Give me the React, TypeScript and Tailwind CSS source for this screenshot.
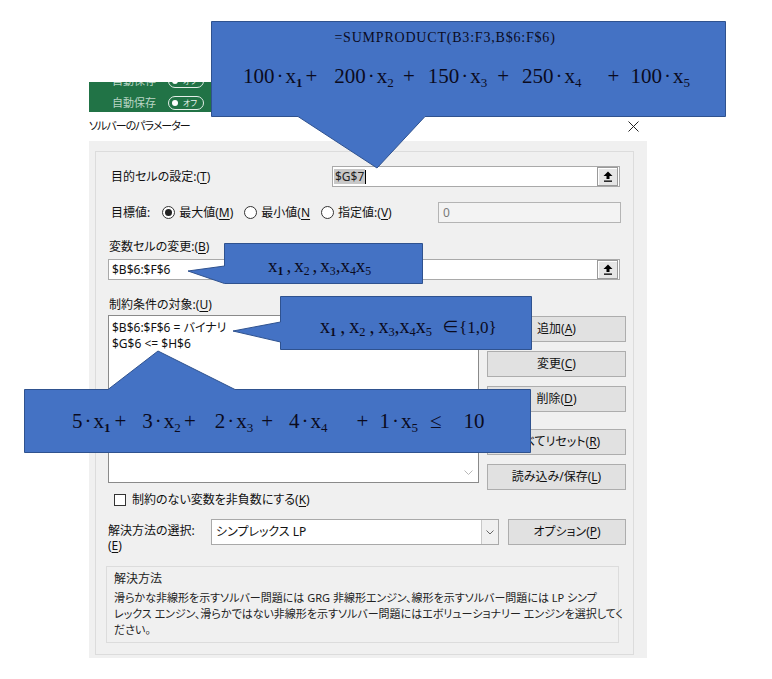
import React from 'react';

const ui = "font-['Noto_Sans','Noto_Sans_CJK_JP',sans-serif] [font-feature-settings:'palt']";
const serif = "font-['Liberation_Serif','Noto_Sans_CJK_JP',serif]";

function U({ k }: { k: string }) {
  return <span className="underline underline-offset-2">{k}</span>;
}

function Term({ n, s, bold }: { n: string; s: string; bold?: boolean }) {
  return (
    <span className="inline-flex items-baseline whitespace-nowrap">
      <span>{n}</span>
      <span className="mx-[2px]">·</span>
      <span>x</span>
      <span className={`relative top-[4px] text-[0.62em] ${bold ? 'font-bold' : ''}`}>{s}</span>
    </span>
  );
}

function Vars({ size, gap }: { size: string; gap: string }) {
  return (
    <span className={`inline-flex items-baseline whitespace-nowrap ${size}`}>
      <span>x</span>
      <span className="relative top-[3px] text-[0.62em] font-bold">1</span>
      <span className={gap}>,</span>
      <span>x</span>
      <span className="relative top-[3px] text-[0.62em]">2</span>
      <span className={gap}>,</span>
      <span>x</span>
      <span className="relative top-[3px] text-[0.62em]">3</span>
      <span>,</span>
      <span>x</span>
      <span className="relative top-[3px] text-[0.62em]">4</span>
      <span>x</span>
      <span className="relative top-[3px] text-[0.62em]">5</span>
    </span>
  );
}

function UploadBtn() {
  return (
    <div className="flex h-[19px] w-[21px] items-center justify-center border border-[#9a9a9a] bg-[#e6e6e6] shadow-[inset_1px_1px_0_#fff]">
      <svg width="10" height="11" viewBox="0 0 10 11">
        <path d="M5 0.5 L9.5 5 H6.5 V8 H3.5 V5 H0.5 Z" fill="#000" />
        <rect x="1" y="9.5" width="8" height="1.3" fill="#000" />
      </svg>
    </div>
  );
}

function Radio({ on }: { on?: boolean }) {
  return (
    <span className="flex h-[13px] w-[13px] items-center justify-center rounded-full border border-[#333] bg-white">
      {on && <span className="h-[7px] w-[7px] rounded-full bg-[#222]" />}
    </span>
  );
}

function Btn({ children }: { children: React.ReactNode }) {
  return (
    <div className="flex h-[26px] w-[139px] items-center justify-center border border-[#adadad] bg-[#e1e1e1] text-[12px] text-[#111]">
      {children}
    </div>
  );
}

function Toggle() {
  return (
    <div className="flex h-[22px] items-center gap-[12px] whitespace-nowrap pl-[23px] text-[11px] text-[#b9d6c5]">
      <span>自動保存</span>
      <span className="flex h-[14px] w-[36px] items-center gap-[5px] rounded-full border-[1.5px] border-[#e4eee8] px-[3px] text-[8px] leading-none text-[#eef5f1]">
        <span className="h-[6px] w-[6px] shrink-0 rounded-full bg-white" />
        <span>オフ</span>
      </span>
    </div>
  );
}

export default function App() {
  return (
    <div className={`relative h-[679px] w-[772px] overflow-hidden bg-white ${ui}`}>
      <div className="flex flex-col pl-[89px] pt-[82px]">
        {/* Excel ribbon leftover */}
        <div className="h-[30px] w-[150px] overflow-hidden bg-[#217346]">
          <div className="-mt-[12px]">
            <Toggle />
            <Toggle />
          </div>
        </div>

        {/* title bar */}
        <div className="flex h-[29px] w-[558px] items-center justify-between text-[#111]">
          <span className="text-[11px] tracking-[-1px]">ソルバーのパラメーター</span>
          <svg width="11" height="11" viewBox="0 0 11 11" className="mr-[8px]">
            <path d="M0.5 0.5 L10.5 10.5 M10.5 0.5 L0.5 10.5" stroke="#222" strokeWidth="1" />
          </svg>
        </div>

        {/* dialog body */}
        <div className="h-[517px] w-[558px] bg-[#f0f0f0] pl-[6px] pr-[13px] pt-[10px] text-[12px] text-[#111]">
          <div className="flex h-[504px] flex-col border border-[#dcdcdc] pl-[12px]">
            {/* objective */}
            <div className="mt-[14px] flex h-[21px] items-center">
              <span className="ml-[3px] w-[221px]">
                目的セルの設定:(<U k="T" />)
              </span>
              <div className="flex h-[21px] w-[288px] items-center border border-[#a9a9a9] bg-white pl-[1px] pr-[1px]">
                <span className="bg-[#c8c8c8] px-[1px] text-[12px] leading-[15px] text-[#222]">$G$7</span>
                <span className="h-[14px] w-[1px] bg-black" />
                <span className="flex-1" />
                <UploadBtn />
              </div>
            </div>

            {/* target */}
            <div className="mt-[15px] flex h-[21px] items-center">
              <span className="ml-[3px]">目標値:</span>
              <span className="ml-[12px] flex items-center gap-[4px]">
                <Radio on />
                <span>
                  最大値(<U k="M" />)
                </span>
              </span>
              <span className="ml-[11px] flex items-center gap-[4px]">
                <Radio />
                <span>
                  最小値(<U k="N" />
                </span>
              </span>
              <span className="ml-[11px] flex items-center gap-[4px]">
                <Radio />
                <span>
                  指定値:(<U k="V" />)
                </span>
              </span>
              <div className="ml-auto mr-[12px] flex h-[21px] w-[183px] items-center border border-[#b4b4b4] bg-[#f3f3f3] pl-[4px] text-[#7a7a7a]">
                0
              </div>
            </div>

            {/* variable cells */}
            <div className="mt-[16px] flex h-[16px] items-center">
              <span className="ml-[1px]">
                変数セルの変更:(<U k="B" />)
              </span>
            </div>
            <div className="mt-[4px] flex h-[21px] w-[512px] items-center border border-[#a9a9a9] bg-white pl-[3px] pr-[1px]">
              <span>$B$6:$F$6</span>
              <span className="flex-1" />
              <UploadBtn />
            </div>

            {/* constraints */}
            <div className="mt-[17px] flex h-[16px] items-center">
              <span className="ml-[1px]">
                制約条件の対象:(<U k="U" />)
              </span>
            </div>
            <div className="mt-[2px] flex gap-[8px]">
              <div className="relative flex h-[168px] w-[371px] flex-col border border-[#8a8a8a] bg-white px-[3px] pt-[4px] leading-[16px]">
                <span>$B$6:$F$6 = バイナリ</span>
                <span>$G$6 &lt;= $H$6</span>
                <svg width="9" height="6" viewBox="0 0 9 6" className="absolute bottom-[6px] right-[5px]">
                  <path d="M0.5 0.5 L4.5 4.5 L8.5 0.5" stroke="#b8b8b8" fill="none" />
                </svg>
              </div>
              <div className="flex flex-col">
                <div className="mt-[1px]">
                  <Btn>
                    追加(<U k="A" />)
                  </Btn>
                </div>
                <div className="mt-[9px]">
                  <Btn>
                    変更(<U k="C" />)
                  </Btn>
                </div>
                <div className="mt-[9px]">
                  <Btn>
                    削除(<U k="D" />)
                  </Btn>
                </div>
                <div className="mt-[17px]">
                  <Btn>
                    すべてリセット(<U k="R" />)
                  </Btn>
                </div>
                <div className="mt-[9px]">
                  <Btn>
                    読み込み/保存(<U k="L" />)
                  </Btn>
                </div>
              </div>
            </div>

            {/* non-negative */}
            <div className="mt-[2px] flex h-[16px] items-center gap-[6px] pl-[6px]">
              <span className="h-[12px] w-[12px] border border-[#333] bg-white" />
              <span>
                制約のない変数を非負数にする(<U k="K" />)
              </span>
            </div>

            {/* solving method */}
            <div className="mt-[11px] flex h-[26px] items-start">
              <div className="flex w-[103px] flex-col leading-[15px]">
                <span className="mt-[4px]">解決方法の選択:</span>
                <span>
                  (<U k="E" />)
                </span>
              </div>
              <div className="flex h-[26px] w-[288px] items-center border border-[#a9a9a9] bg-white pl-[4px]">
                <span>シンプレックス LP</span>
                <span className="flex-1" />
                <span className="flex h-[24px] w-[17px] items-center justify-center border-l border-[#c8c8c8] bg-[#f0f0f0]">
                  <svg width="8" height="5" viewBox="0 0 8 5">
                    <path d="M0.5 0.5 L4 4 L7.5 0.5" stroke="#666" fill="none" />
                  </svg>
                </span>
              </div>
              <div className="ml-[9px]">
                <div className="flex h-[26px] w-[118px] items-center justify-center border border-[#adadad] bg-[#e1e1e1]">
                  オプション(<U k="P" />)
                </div>
              </div>
            </div>

            {/* description */}
            <div className="-ml-[2px] mt-[21px] flex h-[77px] w-[513px] flex-col border border-[#dcdcdc] px-[7px] pt-[4px] text-[11px] leading-[16px] text-[#222]">
              <span className="text-[12px]">解決方法</span>
              <span className="mt-[3px] whitespace-nowrap">
                滑らかな非線形を示すソルバー問題には GRG 非線形エンジン、線形を示すソルバー問題には LP シンプ
                <br />
                レックス エンジン、滑らかではない非線形を示すソルバー問題にはエボリューショナリー エンジンを選択してく
                <br />
                ださい。
              </span>
            </div>
          </div>
        </div>
      </div>

      {/* callout shapes */}
      <svg width="772" height="679" viewBox="0 0 772 679" className="pointer-events-none absolute left-0 top-0">
        <g fill="#4472c4" stroke="#2f528f" strokeWidth="1">
          <path d="M211.5 21.5 H725.5 V116.5 H425 L377 168 L298 116.5 H211.5 Z" />
          <path d="M224.5 243.5 H422.5 V283.5 H224.5 L188 271 L224.5 266 Z" />
          <path d="M280.5 296.5 H531.5 V349.5 H280.5 V342 L233 331 L280.5 322 Z" />
          <path d="M24.5 389.5 H108 L158 351 L235 389.5 H530.5 V452.5 H24.5 Z" />
        </g>
      </svg>

      {/* callout texts */}
      <div className={`absolute left-[211px] top-[21px] flex h-[95px] w-[514px] flex-col items-center pr-[46px] text-[#0b0b1e] ${serif}`}>
        <span className="mt-[8px] text-[14px] leading-[18px] tracking-[0.8px]">=SUMPRODUCT(B3:F3,B$6:F$6)</span>
      </div>
      <div className={`absolute left-[243px] top-[62px] flex items-baseline text-[21px] leading-[28px] text-[#0b0b1e] ${serif}`}>
        <Term n="100" s="1" bold />
        <span className="ml-[3px]">+</span>
        <span className="ml-[17px]">
          <Term n="200" s="2" />
        </span>
        <span className="ml-[9px]">+</span>
        <span className="ml-[13px]">
          <Term n="150" s="3" />
        </span>
        <span className="ml-[10px]">+</span>
        <span className="ml-[13px]">
          <Term n="250" s="4" />
        </span>
        <span className="ml-[26px]">+</span>
        <span className="ml-[11px]">
          <Term n="100" s="5" />
        </span>
      </div>

      <div className={`absolute left-[268px] top-[252px] flex items-baseline text-[#0b0b1e] ${serif}`}>
        <Vars size="text-[19px]" gap="mx-[3px]" />
      </div>

      <div className={`absolute left-[320px] top-[311px] flex items-baseline text-[#0b0b1e] ${serif}`}>
        <Vars size="text-[20px]" gap="mx-[4px]" />
        <span className="ml-[10px] text-[17px]">∈{'{'}1,0{'}'}</span>
      </div>

      <div className={`absolute left-[72px] top-[407px] flex items-baseline text-[21px] leading-[28px] text-[#0b0b1e] ${serif}`}>
        <Term n="5" s="1" bold />
        <span className="ml-[4px]">+</span>
        <span className="ml-[16px]">
          <Term n="3" s="2" />
        </span>
        <span className="ml-[3px]">+</span>
        <span className="ml-[19px]">
          <Term n="2" s="3" />
        </span>
        <span className="ml-[8px]">+</span>
        <span className="ml-[16px]">
          <Term n="4" s="4" />
        </span>
        <span className="ml-[29px]">+</span>
        <span className="ml-[11px]">
          <Term n="1" s="5" />
        </span>
        <span className="ml-[12px]">≤</span>
        <span className="ml-[22px]">10</span>
      </div>
    </div>
  );
}
